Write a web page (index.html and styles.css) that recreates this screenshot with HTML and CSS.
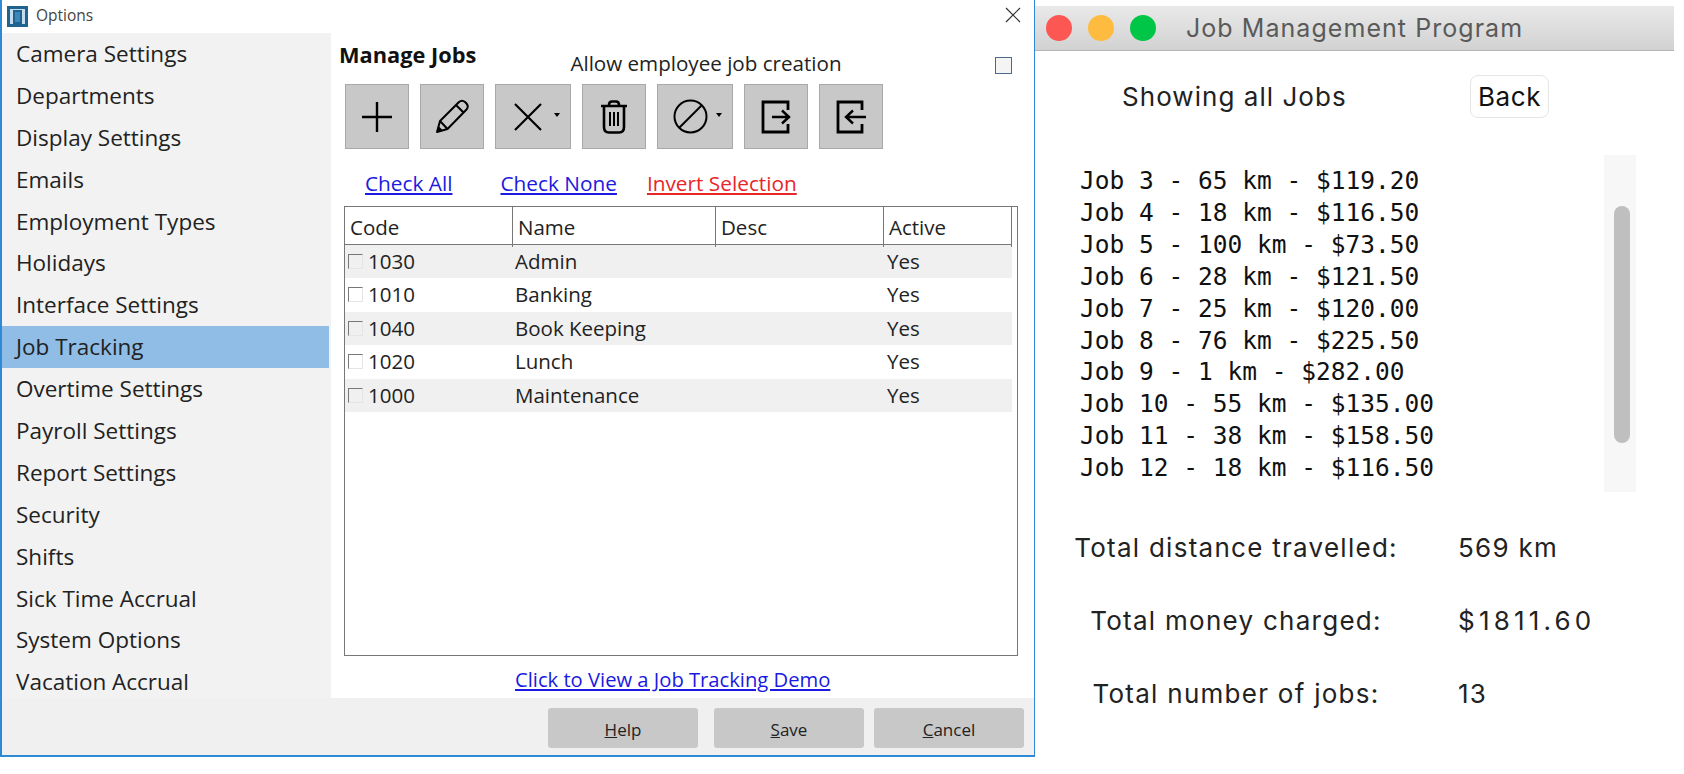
FILE: index.html
```html
<!DOCTYPE html>
<html lang="en">
<head>
  <meta charset="UTF-8" />
  <title>Job tracking windows</title>
  <link rel="stylesheet" href="styles.css">
</head>
<body>

  <!-- Windows options dialog -->
  <div class="options">
    <div class="titlebar">
      <svg class="app-icon" width="21" height="21" viewBox="0 0 21 21">
        <rect width="21" height="21" fill="#1f6391"/>
        <rect x="3" y="3" width="15" height="15" fill="#c5dcec"/>
        <rect x="6" y="4" width="9" height="14" fill="#1f6391"/>
        <rect x="8" y="6" width="5" height="10" fill="#3d87b8"/>
      </svg>
      <span class="titlebar-text">Options</span>
      <svg class="close-icon" width="16" height="16" viewBox="0 0 16 16">
        <path d="M1 1 L15 15 M15 1 L1 15" stroke="#333" stroke-width="1.2" fill="none"/>
      </svg>
    </div>

    <div class="options-body">
      <ul class="side-menu">
        <li>Camera Settings</li>
        <li>Departments</li>
        <li>Display Settings</li>
        <li>Emails</li>
        <li>Employment Types</li>
        <li>Holidays</li>
        <li>Interface Settings</li>
        <li class="selected">Job Tracking</li>
        <li>Overtime Settings</li>
        <li>Payroll Settings</li>
        <li>Report Settings</li>
        <li>Security</li>
        <li>Shifts</li>
        <li>Sick Time Accrual</li>
        <li>System Options</li>
        <li>Vacation Accrual</li>
      </ul>

      <div class="jobs-panel">
        <div class="jobs-head">
          <h2>Manage Jobs</h2>
          <span class="allow-label">Allow employee job creation</span>
          <span class="allow-check"></span>
        </div>

        <div class="toolbar">
          <div class="tool">
            <svg width="32" height="32" viewBox="0 0 32 32"><path d="M1 16 H31 M16 1 V31" stroke="#000" stroke-width="2.4" fill="none"/></svg>
          </div>
          <div class="tool">
            <svg width="34" height="35" viewBox="0 0 34 35"><path d="M2 33 L5 22 L24 3 Q27 0.5 30 3 L31.5 4.5 Q34 7.500 31.500 10.500 L12.500 30 Z M5 22 L12.500 30 M21 6 L28.500 13.500" stroke="#000" stroke-width="2" fill="none" stroke-linejoin="round"/><path d="M2 33 L3.500 27 L8 31.500 Z" fill="#000"/></svg>
          </div>
          <div class="tool tool-wide">
            <svg width="28" height="28" viewBox="0 0 28 28"><path d="M1 1 L27 27 M27 1 L1 27" stroke="#000" stroke-width="2.2" fill="none"/></svg>
            <span class="caret"></span>
          </div>
          <div class="tool">
            <svg width="28" height="34" viewBox="0 0 28 34"><path d="M1 6 H27 M9 5 Q9 1.500 12 1.500 H16 Q19 1.500 19 5 M4 7 V27 Q4 32.500 9 32.500 H19 Q24 32.500 24 27 V7" stroke="#000" stroke-width="2.6" fill="none"/><path d="M10 12 V26 M14 12 V26 M18 12 V26" stroke="#000" stroke-width="2" fill="none"/></svg>
          </div>
          <div class="tool tool-wide">
            <svg width="35" height="35" viewBox="0 0 35 35"><circle cx="17.500" cy="17.500" r="16" stroke="#000" stroke-width="2" fill="none"/><path d="M6 29 L29 6" stroke="#000" stroke-width="2" fill="none"/></svg>
            <span class="caret"></span>
          </div>
          <div class="tool">
            <svg width="30" height="34" viewBox="0 0 30 34"><path d="M27 10 V2 H2 V32 H27 V24" stroke="#000" stroke-width="2.8" fill="none"/><path d="M11 17 H29 M21 10.500 L28 17 L21 23.500" stroke="#000" stroke-width="2.4" fill="none"/></svg>
          </div>
          <div class="tool">
            <svg width="30" height="34" viewBox="0 0 30 34"><path d="M26 10 V2 H2 V32 H26 V24" stroke="#000" stroke-width="2.8" fill="none"/><path d="M11 17 H30 M17 10.500 L10 17 L17 23.500" stroke="#000" stroke-width="2.4" fill="none"/></svg>
          </div>
        </div>

        <div class="check-links">
          <a class="link link-all">Check All</a>
          <a class="link link-none">Check None</a>
          <a class="link link-invert">Invert Selection</a>
        </div>

        <div class="jobs-table">
          <div class="table-row table-head">
            <div>Code</div>
            <div>Name</div>
            <div>Desc</div>
            <div>Active</div>
          </div>
          <div class="table-row">
            <div><span class="row-check"></span>1030</div>
            <div>Admin</div>
            <div></div>
            <div>Yes</div>
          </div>
          <div class="table-row">
            <div><span class="row-check"></span>1010</div>
            <div>Banking</div>
            <div></div>
            <div>Yes</div>
          </div>
          <div class="table-row">
            <div><span class="row-check"></span>1040</div>
            <div>Book Keeping</div>
            <div></div>
            <div>Yes</div>
          </div>
          <div class="table-row">
            <div><span class="row-check"></span>1020</div>
            <div>Lunch</div>
            <div></div>
            <div>Yes</div>
          </div>
          <div class="table-row">
            <div><span class="row-check"></span>1000</div>
            <div>Maintenance</div>
            <div></div>
            <div>Yes</div>
          </div>
        </div>

        <a class="link demo-link">Click to View a Job Tracking Demo</a>
      </div>
    </div>

    <div class="options-footer">
      <button><u>H</u>elp</button>
      <button><u>S</u>ave</button>
      <button><u>C</u>ancel</button>
    </div>
  </div>

  <!-- Mac job program window -->
  <div class="program">
    <div class="mac-bar">
      <span class="light light-red"></span>
      <span class="light light-yellow"></span>
      <span class="light light-green"></span>
      <span class="mac-title">Job Management Program</span>
    </div>

    <div class="program-head">
      <span class="showing">Showing all Jobs</span>
      <button class="back">Back</button>
    </div>

    <div class="list-wrap">
      <ul class="job-list">
        <li>Job 3 - 65 km - $119.20</li>
        <li>Job 4 - 18 km - $116.50</li>
        <li>Job 5 - 100 km - $73.50</li>
        <li>Job 6 - 28 km - $121.50</li>
        <li>Job 7 - 25 km - $120.00</li>
        <li>Job 8 - 76 km - $225.50</li>
        <li>Job 9 - 1 km - $282.00</li>
        <li>Job 10 - 55 km - $135.00</li>
        <li>Job 11 - 38 km - $158.50</li>
        <li>Job 12 - 18 km - $116.50</li>
      </ul>
      <div class="scroll-track"><div class="scroll-thumb"></div></div>
    </div>

    <div class="totals">
      <span class="total-label">Total distance travelled:</span><span>569 km</span>
      <span class="total-label">Total money charged:</span><span class="total-money">$1811.60</span>
      <span class="total-label">Total number of jobs:</span><span>13</span>
    </div>
  </div>

</body>
</html>
```

FILE: styles.css
```css
body {
  margin: 0;
  width: 1684px;
  height: 774px;
  overflow: hidden;
  background-color: #fff;
  display: flex;
  align-items: flex-start;
  font-family: "Open Sans", sans-serif;
  color: #222;
}

/* options dialog */
.options {
  width: 1035px;
  height: 757px;
  box-sizing: border-box;
  border: solid #2f8ad6;
  border-width: 0 1px 2px 2px;
  background-color: #f0f0f0;
  display: flex;
  flex-direction: column;
}
.titlebar {
  height: 33px;
  flex: none;
  background-color: #fff;
  display: flex;
  align-items: center;
  padding: 0 13px 0 5px;
  gap: 8px;
}
.titlebar-text {
  font-size: 15.5px;
  line-height: 28px;
  padding-bottom: 4px;
  color: #444;
  flex: 1;
}
.close-icon {
  margin-bottom: 3px;
}
.options-body {
  height: 665px;
  flex: none;
  display: flex;
}
.side-menu {
  list-style: none;
  margin: 0;
  padding: 0;
  width: 329px;
  flex: none;
  background-color: #f2f2f2;
}
.side-menu li {
  height: 41.9px;
  line-height: 41.9px;
  padding-left: 14px;
  margin-right: 2px;
  font-size: 22.5px;
}
.side-menu li.selected {
  background-color: #8fbde6;
}

.jobs-panel {
  flex: 1;
  background-color: #fff;
  padding-left: 13px;
  display: flex;
  flex-direction: column;
}
.jobs-head {
  height: 51px;
  display: flex;
  align-items: flex-start;
}
.jobs-head h2 {
  margin: 8px 0 0 -5px;
  font-size: 21.8px;
  line-height: 28px;
  font-weight: 700;
  color: #111;
}
.allow-label {
  margin: 15px 0 0 94px;
  font-size: 20.6px;
  line-height: 30px;
}
.allow-check {
  width: 15px;
  height: 15px;
  margin: 24px 22px 0 auto;
  border: 1px solid #4a6a8a;
  background-color: #f4f4f4;
}

.toolbar {
  display: flex;
  gap: 11px;
  margin-left: 1px;
}
.tool {
  width: 64px;
  height: 65px;
  box-sizing: border-box;
  border: 1px solid #a8a8a8;
  background-color: #c8c8c8;
  display: flex;
  align-items: center;
  justify-content: center;
}
.tool-wide {
  width: 76px;
  padding-right: 10px;
  position: relative;
}
.caret {
  position: absolute;
  right: 10px;
  top: 28px;
  border: 3.5px solid transparent;
  border-top: 4px solid #000;
  border-bottom: 0;
}

.check-links {
  height: 57px;
  box-sizing: border-box;
  padding-top: 10px;
  display: flex;
  align-items: center;
}
.link {
  font-size: 20.8px;
  color: #1a1ae0;
  text-decoration: underline;
}
.link-all {
  margin-left: 21px;
}
.link-none {
  margin-left: 48px;
}
.link-invert {
  margin-left: 30px;
  color: #e8262a;
}

.jobs-table {
  width: 674px;
  height: 450px;
  box-sizing: border-box;
  border: 1.5px solid #777;
  padding-right: 5px;
}
.table-row {
  display: grid;
  grid-template-columns: 168px 203px 168px 128px;
  height: 33.4px;
  line-height: 33px;
  font-size: 20.5px;
}
.table-row:nth-child(even) {
  background-color: #f0f0f0;
}
.table-row > div {
  padding-left: 2px;
  white-space: nowrap;
}
.table-row > div:last-child {
  padding-left: 3px;
}
.table-head {
  height: 38px;
  line-height: 40px;
  box-sizing: border-box;
  border-bottom: 1.5px solid #777;
}
.table-head > div,
.table-head > div:last-child {
  border-right: 1px solid #777;
  padding-left: 5px;
}
.row-check {
  display: inline-block;
  width: 13px;
  height: 13px;
  margin: 0 5px 0 1px;
  border: 1px solid #777;
  border-right-color: #e5e5e5;
  border-bottom-color: #e5e5e5;
}

.demo-link {
  align-self: flex-start;
  margin: 9px 0 0 171px;
  font-size: 20.2px;
  line-height: 28px;
}

.options-footer {
  flex: 1;
  display: flex;
  justify-content: flex-end;
  align-items: flex-start;
  gap: 16px;
  padding: 10px 10px 0 0;
}
.options-footer button {
  width: 150px;
  height: 40px;
  padding: 2px 0 0;
  border: none;
  border-radius: 3px;
  background-color: #c8c8c8;
  font-family: "Open Sans", sans-serif;
  font-size: 17px;
  color: #222;
}
.options-footer button:last-child {
  margin-left: -6px;
}

/* mac program window */
.program {
  width: 639px;
  margin-top: 6px;
  font-family: Inter, "Liberation Sans", sans-serif;
  color: #222;
}
.mac-bar {
  height: 44px;
  background: linear-gradient(#e9e9e9, #d2d2d2);
  border-bottom: 1px solid #b5b5b5;
  display: flex;
  align-items: center;
  padding-left: 11px;
  gap: 16px;
}
.light {
  width: 26px;
  height: 26px;
  border-radius: 50%;
}
.light-red {
  background-color: #fc5753;
}
.light-yellow {
  background-color: #fdbc40;
}
.light-green {
  background-color: #00c648;
}
.mac-title {
  margin-left: 14px;
  font-size: 25px;
  letter-spacing: 1.05px;
  color: #5a5a5a;
}
.program-head {
  height: 104px;
  display: flex;
  align-items: flex-start;
  padding-left: 87px;
  font-size: 26px;
  letter-spacing: 1.05px;
}
.showing {
  margin-top: 30px;
  width: 348px;
  line-height: 32px;
}
.back {
  width: 79px;
  height: 43px;
  margin-top: 24px;
  padding: 0;
  border: 1px solid #e6e6e6;
  border-radius: 8px;
  background-color: #fff;
  font-family: Inter, "Liberation Sans", sans-serif;
  font-size: 26px;
  letter-spacing: 0.6px;
  color: #111;
}
.list-wrap {
  height: 337px;
  display: flex;
  justify-content: space-between;
  padding: 0 38px 0 45px;
}
.job-list {
  list-style: none;
  margin: 10px 0 0;
  padding: 0;
  font-family: "DejaVu Sans Mono", monospace;
  font-size: 24.5px;
  line-height: 31.9px;
  color: #111;
}
.scroll-track {
  width: 32px;
  height: 337px;
  box-sizing: border-box;
  padding: 51px 6px 0 10px;
  background-color: #f7f7f7;
}
.scroll-thumb {
  height: 237px;
  border-radius: 8px;
  background-color: #bfbfbf;
}
.totals {
  margin-top: 40px;
  display: grid;
  grid-template-columns: 326px auto;
  column-gap: 59px;
  row-gap: 41px;
  padding-left: 38px;
  font-size: 26px;
  letter-spacing: 1.27px;
  line-height: 32px;
}
.total-label {
  text-align: center;
}
.total-money {
  letter-spacing: 4.2px;
}
```
